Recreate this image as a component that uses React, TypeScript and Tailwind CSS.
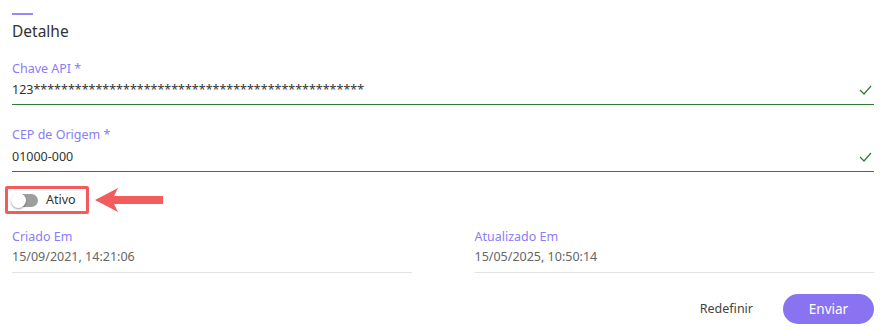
const font = { fontFamily: "'Noto Sans', Lato, sans-serif" };

function Check() {
  return (
    <svg width="13" height="10" viewBox="0 0 13 10" fill="none">
      <path d="M1 5l4 4 7-8" stroke="#2e7d32" strokeWidth="1.2" />
    </svg>
  );
}

function Field({ label, value, gap }: { label: string; value: string; gap: string }) {
  return (
    <div className="flex flex-col">
      <span className="text-[12.5px] leading-[16px] text-[#8c7cf5]">{label}</span>
      <div className={`${gap} flex items-center justify-between border-b border-[#2e7d32] pb-[5px] pr-[2px]`}>
        <span className="text-[12.5px] leading-[18px] text-[#333]">{value}</span>
        <Check />
      </div>
    </div>
  );
}

function ReadOnly({ label, value }: { label: string; value: string }) {
  return (
    <div className="flex flex-col">
      <span className="text-[12.5px] leading-[16px] text-[#8c7cf5]">{label}</span>
      <span className="mt-[3px] text-[12.5px] leading-[18px] text-[#666]">{value}</span>
      <div className="mt-[6px] h-px bg-[#e3e3e3]" />
    </div>
  );
}

export default function App() {
  const stars = "*".repeat(48);
  return (
    <div className="w-[884px] h-[332px] bg-white pl-[12px] pr-[10px] pt-[13px]" style={font}>
      <div className="w-[21px] h-[2px] bg-[#9b87f5]" />
      <h2 className="mt-[6px] text-[15.5px] leading-[20px] text-[#333]">Detalhe</h2>

      <div className="mt-[20px]">
        <Field label="Chave API *" value={"123" + stars} gap="mt-[4px]" />
      </div>
      <div className="mt-[22px]">
        <Field label="CEP de Origem *" value="01000-000" gap="mt-[5px]" />
      </div>

      <div className="mt-[14px] flex items-center">
        <div className="-ml-[7px] flex items-center gap-[8px] rounded-[2px] border-[3px] border-[#f25c5c] px-[4px] h-[28px]">
          <div className="relative w-[26px] h-[13px] rounded-full bg-[#9e9e9e]">
            <div className="absolute -left-[1px] -top-[1px] w-[15px] h-[15px] rounded-full bg-white shadow-[0_1px_2px_rgba(0,0,0,0.4)]" />
          </div>
          <span className="text-[12.5px] text-[#333] pr-[6px]">Ativo</span>
        </div>
        <svg className="ml-[6px]" width="68" height="26" viewBox="0 0 68 26">
          <path d="M0 13 L23 1 L19 9 L68 9 L68 17 L19 17 L23 25 Z" fill="#f25c5c" />
        </svg>
      </div>

      <div className="mt-[15px] grid grid-cols-2 gap-[63px]">
        <ReadOnly label="Criado Em" value="15/09/2021, 14:21:06" />
        <ReadOnly label="Atualizado Em" value="15/05/2025, 10:50:14" />
      </div>

      <div className="mt-[21px] flex items-center justify-end gap-[30px]">
        <button className="text-[12.5px] text-[#444]">Redefinir</button>
        <button className="w-[91px] h-[30px] rounded-full bg-[#8a73f0] text-[13.5px] text-white">Enviar</button>
      </div>
    </div>
  );
}
